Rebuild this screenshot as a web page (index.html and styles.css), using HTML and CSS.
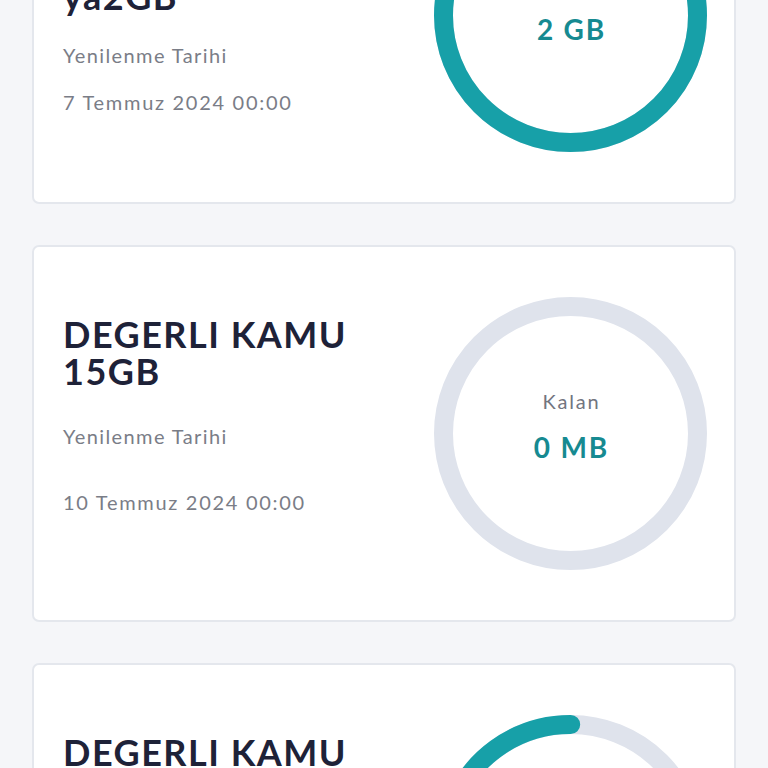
FILE: index.html
```html
<!DOCTYPE html>
<html lang="tr">
<head>
<meta charset="utf-8">
<title>Paketlerim</title>
<link rel="stylesheet" href="styles.css">
</head>
<body>
<main class="list">
  <section class="card card--first">
    <div class="info">
      <h2 class="title">DEGERLI KAMU<br>SosyalMed<br>ya2GB</h2>
      <div class="label">Yenilenme Tarihi</div>
      <div class="date">7 Temmuz 2024 00:00</div>
    </div>
    <div class="ring">
      <svg class="ring-svg" viewBox="0 0 273 273" width="273" height="273">
        <circle class="track" cx="136.5" cy="136.5" r="127"/>
        <circle class="bar" cx="136.5" cy="136.5" r="127"/>
      </svg>
      <div class="ring-text">
        <span class="ring-label">Kalan</span>
        <span class="ring-value">2 GB</span>
      </div>
    </div>
  </section>

  <section class="card">
    <div class="info">
      <h2 class="title">DEGERLI KAMU<br>15GB</h2>
      <div class="label">Yenilenme Tarihi</div>
      <div class="date">10 Temmuz 2024 00:00</div>
    </div>
    <div class="ring">
      <svg class="ring-svg" viewBox="0 0 273 273" width="273" height="273">
        <circle class="track" cx="136.5" cy="136.5" r="127"/>
      </svg>
      <div class="ring-text">
        <span class="ring-label">Kalan</span>
        <span class="ring-value">0 MB</span>
      </div>
    </div>
  </section>

  <section class="card">
    <div class="info">
      <h2 class="title">DEGERLI KAMU<br>15GB</h2>
      <div class="label">Yenilenme Tarihi</div>
      <div class="date">14 Temmuz 2024 00:00</div>
    </div>
    <div class="ring">
      <svg class="ring-svg" viewBox="0 0 273 273" width="273" height="273">
        <circle class="track" cx="136.5" cy="136.5" r="127"/>
        <circle class="bar bar--part" cx="136.5" cy="136.5" r="127" style="stroke-dasharray: 478.8 797.96"/>
      </svg>
      <div class="ring-text">
        <span class="ring-label">Kalan</span>
        <span class="ring-value">9 GB</span>
      </div>
    </div>
  </section>
</main>
</body>
</html>
```
FILE: styles.css
```css
html, body {
  margin: 0;
  padding: 0;
  background: #f5f6f9;
  font-family: Lato, "Noto Sans", "Liberation Sans", sans-serif;
  overflow: hidden;
}

.list {
  display: flex;
  flex-direction: column;
  gap: 41px;
  padding: 0 32px;
  margin-top: -173px;
}

.card {
  display: flex;
  align-items: flex-start;
  background: #ffffff;
  border: 2px solid #e4e7ed;
  border-radius: 7px;
  padding: 50px 27px 50px 29px;
}

.info {
  flex: 1;
  min-width: 0;
  margin-top: 19px;
}

.title {
  margin: 0;
  font-size: 36px;
  line-height: 37px;
  font-weight: 700;
  color: #1e2238;
  letter-spacing: 1.5px;
}

.label,
.date {
  font-size: 20px;
  line-height: 24px;
  color: #7a7d87;
  letter-spacing: 1.4px;
}

.date {
  letter-spacing: 1.7px;
}

.label {
  margin-top: 34px;
}

.date {
  margin-top: 42px;
}

.card--first .info {
  margin-top: 25px;
}

.card--first .label {
  margin-top: 28px;
}

.card--first .date {
  margin-top: 23px;
}

.ring {
  position: relative;
  width: 273px;
  height: 273px;
  flex: none;
  display: flex;
  align-items: center;
  justify-content: center;
}

.ring-svg {
  position: absolute;
  left: 0;
  top: 0;
}

.track,
.bar {
  fill: none;
  stroke-width: 19;
}

.track {
  stroke: #dfe3ec;
}

.bar {
  stroke: #17a0a8;
}

.bar--part {
  stroke-linecap: round;
  transform: rotate(54deg);
  transform-origin: 136.5px 136.5px;
}

.ring-text {
  position: relative;
  display: flex;
  flex-direction: column;
  align-items: center;
  gap: 17px;
  padding-bottom: 14px;
}

.ring-label {
  font-size: 20px;
  line-height: 24px;
  color: #72757f;
  letter-spacing: 1.8px;
  padding-left: 1.8px;
}

.ring-value {
  font-size: 28px;
  line-height: 34px;
  font-weight: 700;
  color: #168a91;
  letter-spacing: 1.8px;
  padding-left: 1.8px;
}
```
